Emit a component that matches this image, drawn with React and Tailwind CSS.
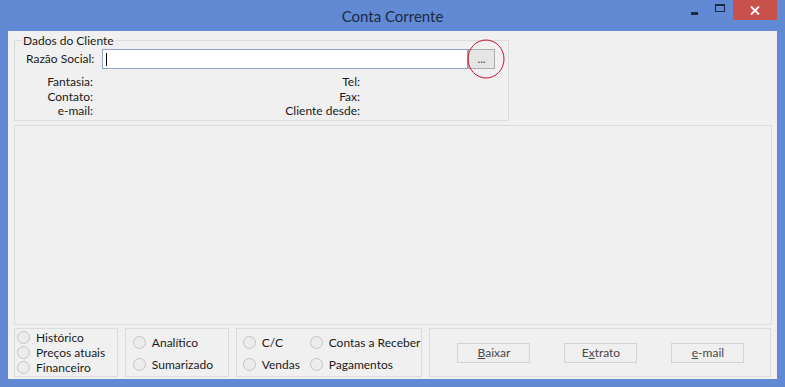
import React from 'react';

const font = { fontFamily: 'Lato, "Segoe UI", "Liberation Sans", sans-serif' };

const Radio = ({ label, className = '' }) => (
  <label className={`flex items-center gap-[6px] text-[12px] leading-[15px] text-[#1a1a1a] whitespace-nowrap ${className}`}>
    <span className="w-[13px] h-[13px] rounded-full border border-[#c4c4c4] bg-[#ececec] shrink-0" />
    <span>{label}</span>
  </label>
);

const WinButton = ({ pre = '', hot, post = '' }) => (
  <button className="w-[73px] h-[20px] border border-[#d3d3d3] bg-[#efefef] text-[12px] leading-[18px] text-[#4a4a4a] whitespace-nowrap">
    {pre}
    <span className="underline">{hot}</span>
    {post}
  </button>
);

const App = () => {
  return (
    <div className="w-[785px] h-[387px] bg-[#6189d4] flex flex-col overflow-hidden" style={font}>
      {/* title bar */}
      <div className="relative h-[31px] flex items-center justify-center shrink-0">
        <span className="text-[15px] text-[#1c2a44] mt-[1px]">Conta Corrente</span>
        <div className="absolute right-[8px] top-0 flex items-start">
          <div className="w-[26px] h-[20px] flex items-center justify-center">
            <span className="block w-[7px] h-[3px] bg-[#1c2a44] mt-[6px]" />
          </div>
          <div className="w-[26px] h-[20px] flex items-center justify-center">
            <span className="block w-[10px] h-[8px] border border-[#1c2a44] border-t-2 -mt-[4px]" />
          </div>
          <div className="w-[44px] h-[20px] bg-[#c9514b] flex items-center justify-center">
            <svg width="10" height="9" viewBox="0 0 10 9">
              <path d="M1 0.5 L9 8.5 M9 0.5 L1 8.5" stroke="#fff" strokeWidth="1.8" />
            </svg>
          </div>
        </div>
      </div>

      {/* client area */}
      <div className="mx-[8px] h-[348px] bg-[#f0f0f0] flex flex-col px-[6px] shrink-0">
        {/* Dados do Cliente */}
        <fieldset className="relative mt-[3px] w-[495px] h-[87px] border border-[#dcdcdc] pl-[11px]">
          <legend className="text-[12px] leading-[13px] text-[#1a1a1a] px-[1px] ml-[-4px] whitespace-nowrap">Dados do Cliente</legend>
          <div className="flex items-center mt-[2px] h-[20px] whitespace-nowrap">
            <span className="w-[67px] text-right text-[12px] text-[#1a1a1a]">Razão Social:</span>
            <div className="ml-[9px] w-[366px] h-[20px] bg-white border border-[#8ea6cf] flex items-center pl-[3px]">
              <span className="block w-[1px] h-[13px] bg-black" />
            </div>
            <button className="w-[27px] h-[20px] border border-[#adadad] bg-[#e5e5e5] text-[11px] leading-[14px] text-[#333] -mt-[1px]">
              ...
            </button>
          </div>
          <div className="flex mt-[6px] text-[12px] leading-[14.5px] text-[#1a1a1a] whitespace-nowrap">
            <div className="w-[67px] flex flex-col items-end">
              <span>Fantasia:</span>
              <span>Contato:</span>
              <span>e-mail:</span>
            </div>
            <div className="w-[267px] flex flex-col items-end">
              <span>Tel:</span>
              <span>Fax:</span>
              <span>Cliente desde:</span>
            </div>
          </div>
          {/* red annotation circle */}
          <svg className="absolute left-[451px] top-[-9px] pointer-events-none" width="40" height="42" viewBox="0 0 40 42">
            <ellipse cx="20" cy="21" rx="18" ry="19" fill="none" stroke="#c8102e" strokeWidth="1" />
          </svg>
        </fieldset>

        {/* big panel */}
        <div className="mt-[4px] w-[758px] h-[200px] border border-[#dcdcdc]" />

        {/* bottom groups */}
        <div className="mt-[3px] flex h-[49px] gap-[7px]">
          <div className="w-[104px] border border-[#dcdcdc] pl-[2px] pt-[1px] flex flex-col">
            <Radio label="Histórico" />
            <Radio label="Preços atuais" />
            <Radio label="Financeiro" />
          </div>
          <div className="w-[104px] border border-[#dcdcdc] pl-[7px] pt-[6px] flex flex-col gap-[7px]">
            <Radio label="Analítico" />
            <Radio label="Sumarizado" />
          </div>
          <div className="w-[187px] border border-[#dcdcdc] pl-[6px] pt-[6px] grid grid-cols-[67px_1fr] content-start gap-y-[7px]">
            <Radio label="C/C" />
            <Radio label="Contas a Receber" />
            <Radio label="Vendas" />
            <Radio label="Pagamentos" />
          </div>
          <div className="w-[342px] border border-[#dcdcdc] flex items-center pl-[27px] gap-[34px]">
            <WinButton hot="B" post="aixar" />
            <WinButton pre="E" hot="x" post="trato" />
            <WinButton hot="e" post="-mail" />
          </div>
        </div>
      </div>
    </div>
  );
};

export default App;
